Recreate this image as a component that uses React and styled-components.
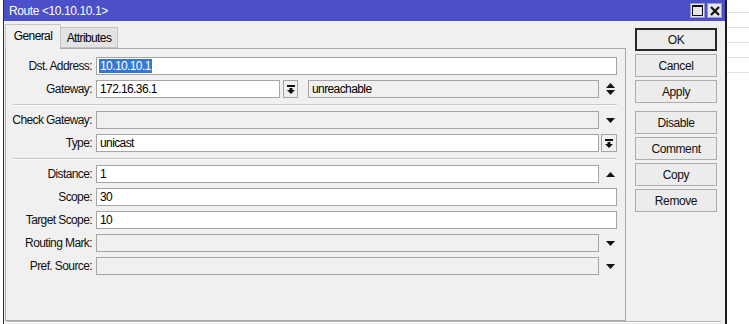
import React from 'react';
import styled, { createGlobalStyle } from 'styled-components';

const GlobalStyle = createGlobalStyle`
  html, body {
    margin: 0;
    padding: 0;
    background: #fff;
  }
  body {
    font-family: "Liberation Sans", Arial, sans-serif;
    font-size: 12px;
    letter-spacing: -0.6px;
    color: #000;
  }
`;

const Screen = styled.div`
  display: flex;
  width: 749px;
  height: 324px;
  overflow: hidden;
  background: #fff;
`;

const LeftEdge = styled.div`
  flex: none;
  width: 3px;
  background: #fff;
`;

const RightEdge = styled.div`
  flex: 1;
  display: flex;
  flex-direction: column;
  padding-top: 12px;
`;

const GridLine = styled.div`
  height: 14px;
  border-top: 1px solid #e2e2e2;
`;

const Window = styled.div`
  flex: none;
  width: 721px;
  display: flex;
  flex-direction: column;
  background: #f0f0f0;
  border-left: 1px solid #2e2e2e;
  border-right: 2px solid #1c1c1c;
`;

const TitleBar = styled.div`
  flex: none;
  height: 21px;
  display: flex;
  align-items: center;
  padding: 0 3px 0 5px;
  background: #4b4fc8;
  color: #fff;
  font-size: 12px;
  letter-spacing: -0.4px;
`;

const TitleButtons = styled.div`
  margin-left: auto;
  display: flex;
  gap: 2px;
`;

const TitleButton = styled.div`
  width: 15px;
  height: 15px;
  display: flex;
  align-items: center;
  justify-content: center;
  background: #e6e6e6;
  border: 1px solid #9a9ad0;
  box-sizing: border-box;
`;

const Body = styled.div`
  flex: none;
  display: flex;
  gap: 9px;
  padding: 3px 8px 0 1px;
`;

const TabArea = styled.div`
  flex: none;
  width: 621px;
  display: flex;
  flex-direction: column;
`;

const TabStrip = styled.div`
  height: 24px;
  display: flex;
  align-items: flex-end;
`;

const Tab = styled.div`
  position: relative;
  z-index: 1;
  box-sizing: border-box;
  display: flex;
  align-items: center;
  justify-content: center;
  height: ${(p) => (p.$active ? '25px' : '21px')};
  width: ${(p) => p.$width}px;
  margin-bottom: ${(p) => (p.$active ? '-1px' : '0')};
  padding-bottom: ${(p) => (p.$active ? '3px' : '0')};
  background: ${(p) => (p.$active ? '#f0f0f0' : '#e3e3e3')};
  border: 1px solid #c4c4c4;
  border-bottom: ${(p) => (p.$active ? 'none' : '1px solid #c4c4c4')};
  border-left: ${(p) => (p.$active ? '1px solid #c4c4c4' : 'none')};
`;

const Panel = styled.div`
  box-sizing: border-box;
  height: 273px;
  display: flex;
  flex-direction: column;
  gap: 5px;
  padding: 8px 8px 0 0;
  border: 1px solid #a9a9a9;
`;

const Row = styled.div`
  display: grid;
  grid-template-columns: 86px 1fr;
  column-gap: 4px;
  align-items: center;
  height: 18px;
`;

const Label = styled.div`
  text-align: right;
  white-space: nowrap;
  color: #111;
`;

const Field = styled.div`
  display: flex;
  align-items: center;
  height: 18px;
`;

const TextBox = styled.div`
  box-sizing: border-box;
  height: 18px;
  line-height: 16px;
  padding: 0 3px;
  flex: ${(p) => (p.$width ? 'none' : '1')};
  width: ${(p) => (p.$width ? `${p.$width}px` : 'auto')};
  margin-left: ${(p) => p.$offset || 0}px;
  background: ${(p) => (p.$disabled ? '#f0f0f0' : '#fff')};
  border: 1px solid #a5a5a5;
  white-space: nowrap;
  overflow: hidden;
`;

const Selected = styled.span`
  background: #3478d4;
  color: #fff;
  padding: 0 1px;
  margin-left: -1px;
`;

const IconSlot = styled.div`
  flex: none;
  width: 18px;
  height: 18px;
  display: flex;
  align-items: center;
  justify-content: flex-end;
  padding-right: 2px;
  box-sizing: border-box;
`;

const DropButton = styled.div`
  flex: none;
  box-sizing: border-box;
  width: ${(p) => p.$width || 16}px;
  height: 18px;
  margin-left: ${(p) => p.$offset || 2}px;
  display: flex;
  align-items: center;
  justify-content: center;
  background: #f0f0f0;
  border: 1px solid #a5a5a5;
`;

const Separator = styled.div`
  height: 1px;
  margin: 1px 0 1px 7px;
  background: #c8c8c8;
  box-shadow: 0 1px 0 #fafafa;
`;

const ButtonColumn = styled.div`
  flex: none;
  width: 82px;
  display: flex;
  flex-direction: column;
  gap: 3px;
  padding-top: 4px;
`;

const Button = styled.div`
  box-sizing: border-box;
  height: 23px;
  display: flex;
  align-items: center;
  justify-content: center;
  margin-top: ${(p) => (p.$spaced ? '5px' : '0')};
  background: #ececec;
  border: ${(p) => (p.$primary ? '2px solid #262626' : '1px solid #adadad')};
  color: #111;
  letter-spacing: -0.4px;
`;

const StatusBar = styled.div`
  flex: 1;
  margin: 0 4px 0 3px;
  border-top: 1px solid #b5b5b5;
  box-shadow: inset 0 1px 0 #fff;
`;

const DownTri = () => (
  <svg width="9" height="5" viewBox="0 0 9 5">
    <path d="M0 0H9L4.5 5Z" fill="#111" />
  </svg>
);

const UpTri = () => (
  <svg width="9" height="5" viewBox="0 0 9 5">
    <path d="M0 5H9L4.5 0Z" fill="#111" />
  </svg>
);

const UpDown = () => (
  <svg width="9" height="12" viewBox="0 0 9 12">
    <path d="M0 5H9L4.5 0Z" fill="#111" />
    <path d="M0 7H9L4.5 12Z" fill="#111" />
  </svg>
);

const BarDown = () => (
  <svg width="8" height="9" viewBox="0 0 8 9">
    <rect x="0" y="0" width="8" height="2" fill="#111" />
    <path d="M2.5 3H5.5V5H8L4 9L0 5H2.5Z" fill="#111" />
  </svg>
);

const MaxIcon = () => (
  <svg width="11" height="11" viewBox="0 0 11 11">
    <rect x="0.5" y="0.5" width="10" height="10" fill="none" stroke="#111" />
    <rect x="0.5" y="0.5" width="10" height="1.5" fill="#111" />
  </svg>
);

const CloseIcon = () => (
  <svg width="10" height="10" viewBox="0 0 10 10">
    <path d="M1 1L9 9M9 1L1 9" stroke="#111" strokeWidth="2.2" />
  </svg>
);

const actions = ['OK', 'Cancel', 'Apply', 'Disable', 'Comment', 'Copy', 'Remove'];

export default function App() {
  return (
    <>
      <GlobalStyle />
      <Screen>
        <LeftEdge />
        <Window>
          <TitleBar>
            Route &lt;10.10.10.1&gt;
            <TitleButtons>
              <TitleButton>
                <MaxIcon />
              </TitleButton>
              <TitleButton>
                <CloseIcon />
              </TitleButton>
            </TitleButtons>
          </TitleBar>
          <Body>
            <TabArea>
              <TabStrip>
                <Tab $active $width={56}>General</Tab>
                <Tab $width={57}>Attributes</Tab>
              </TabStrip>
              <Panel>
                <Row>
                  <Label>Dst. Address:</Label>
                  <Field>
                    <TextBox>
                      <Selected>10.10.10.1</Selected>
                    </TextBox>
                  </Field>
                </Row>
                <Row>
                  <Label>Gateway:</Label>
                  <Field>
                    <TextBox $width={184}>172.16.36.1</TextBox>
                    <DropButton $width={15} $offset={3}>
                      <BarDown />
                    </DropButton>
                    <TextBox $disabled $offset={10}>unreachable</TextBox>
                    <IconSlot>
                      <UpDown />
                    </IconSlot>
                  </Field>
                </Row>
                <Separator />
                <Row>
                  <Label>Check Gateway:</Label>
                  <Field>
                    <TextBox $disabled />
                    <IconSlot>
                      <DownTri />
                    </IconSlot>
                  </Field>
                </Row>
                <Row>
                  <Label>Type:</Label>
                  <Field>
                    <TextBox>unicast</TextBox>
                    <DropButton>
                      <BarDown />
                    </DropButton>
                  </Field>
                </Row>
                <Separator />
                <Row>
                  <Label>Distance:</Label>
                  <Field>
                    <TextBox>1</TextBox>
                    <IconSlot>
                      <UpTri />
                    </IconSlot>
                  </Field>
                </Row>
                <Row>
                  <Label>Scope:</Label>
                  <Field>
                    <TextBox>30</TextBox>
                  </Field>
                </Row>
                <Row>
                  <Label>Target Scope:</Label>
                  <Field>
                    <TextBox>10</TextBox>
                  </Field>
                </Row>
                <Row>
                  <Label>Routing Mark:</Label>
                  <Field>
                    <TextBox $disabled />
                    <IconSlot>
                      <DownTri />
                    </IconSlot>
                  </Field>
                </Row>
                <Row>
                  <Label>Pref. Source:</Label>
                  <Field>
                    <TextBox $disabled />
                    <IconSlot>
                      <DownTri />
                    </IconSlot>
                  </Field>
                </Row>
              </Panel>
            </TabArea>
            <ButtonColumn>
              {actions.map((a) => (
                <Button key={a} $primary={a === 'OK'} $spaced={a === 'Disable'}>
                  {a}
                </Button>
              ))}
            </ButtonColumn>
          </Body>
          <StatusBar />
        </Window>
        <RightEdge>
          {[0, 1, 2, 3, 4].map((i) => (
            <GridLine key={i} />
          ))}
        </RightEdge>
      </Screen>
    </>
  );
}
